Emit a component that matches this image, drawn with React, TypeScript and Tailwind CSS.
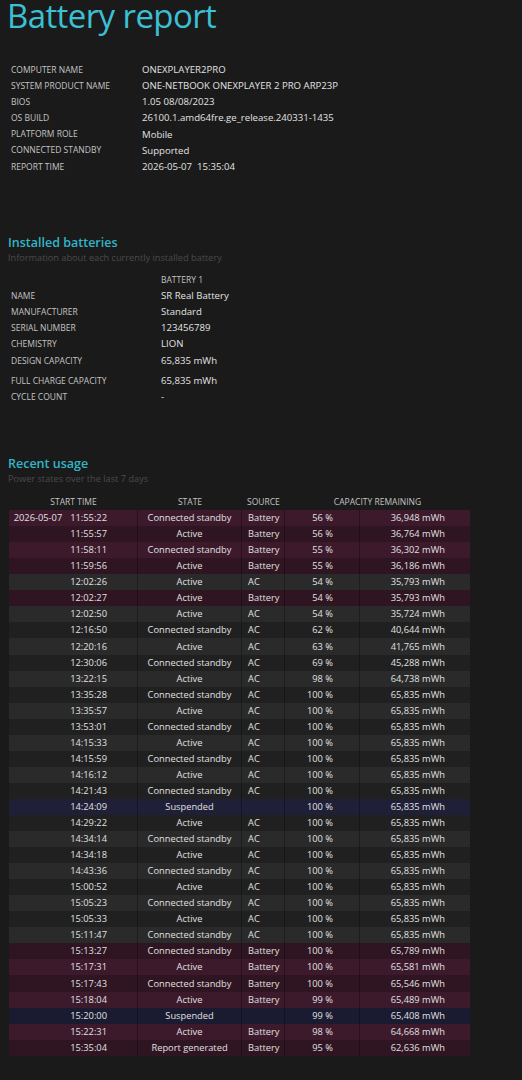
import React from "react";

type Row = [string, string, string, string, string, string];

const rows: Row[] = [
  ["2026-05-07", "11:55:22", "Connected standby", "Battery", "56 %", "36,948 mWh"],
  ["", "11:55:57", "Active", "Battery", "56 %", "36,764 mWh"],
  ["", "11:58:11", "Connected standby", "Battery", "55 %", "36,302 mWh"],
  ["", "11:59:56", "Active", "Battery", "55 %", "36,186 mWh"],
  ["", "12:02:26", "Active", "AC", "54 %", "35,793 mWh"],
  ["", "12:02:27", "Active", "Battery", "54 %", "35,793 mWh"],
  ["", "12:02:50", "Active", "AC", "54 %", "35,724 mWh"],
  ["", "12:16:50", "Connected standby", "AC", "62 %", "40,644 mWh"],
  ["", "12:20:16", "Active", "AC", "63 %", "41,765 mWh"],
  ["", "12:30:06", "Connected standby", "AC", "69 %", "45,288 mWh"],
  ["", "13:22:15", "Active", "AC", "98 %", "64,738 mWh"],
  ["", "13:35:28", "Connected standby", "AC", "100 %", "65,835 mWh"],
  ["", "13:35:57", "Active", "AC", "100 %", "65,835 mWh"],
  ["", "13:53:01", "Connected standby", "AC", "100 %", "65,835 mWh"],
  ["", "14:15:33", "Active", "AC", "100 %", "65,835 mWh"],
  ["", "14:15:59", "Connected standby", "AC", "100 %", "65,835 mWh"],
  ["", "14:16:12", "Active", "AC", "100 %", "65,835 mWh"],
  ["", "14:21:43", "Connected standby", "AC", "100 %", "65,835 mWh"],
  ["", "14:24:09", "Suspended", "", "100 %", "65,835 mWh"],
  ["", "14:29:22", "Active", "AC", "100 %", "65,835 mWh"],
  ["", "14:34:14", "Connected standby", "AC", "100 %", "65,835 mWh"],
  ["", "14:34:18", "Active", "AC", "100 %", "65,835 mWh"],
  ["", "14:43:36", "Connected standby", "AC", "100 %", "65,835 mWh"],
  ["", "15:00:52", "Active", "AC", "100 %", "65,835 mWh"],
  ["", "15:05:23", "Connected standby", "AC", "100 %", "65,835 mWh"],
  ["", "15:05:33", "Active", "AC", "100 %", "65,835 mWh"],
  ["", "15:11:47", "Connected standby", "AC", "100 %", "65,835 mWh"],
  ["", "15:13:27", "Connected standby", "Battery", "100 %", "65,789 mWh"],
  ["", "15:17:31", "Active", "Battery", "100 %", "65,581 mWh"],
  ["", "15:17:43", "Connected standby", "Battery", "100 %", "65,546 mWh"],
  ["", "15:18:04", "Active", "Battery", "99 %", "65,489 mWh"],
  ["", "15:20:00", "Suspended", "", "99 %", "65,408 mWh"],
  ["", "15:22:31", "Active", "Battery", "98 %", "64,668 mWh"],
  ["", "15:35:04", "Report generated", "Battery", "95 %", "62,636 mWh"],
];

function rowBg(source: string, state: string, i: number) {
  const even = i % 2 === 0;
  if (state === "Suspended") return even ? "bg-[#1f1f38]" : "bg-[#1a1a30]";
  if (source === "Battery") return even ? "bg-[#3c1a2c]" : "bg-[#2f1421]";
  return even ? "bg-[#2a2a2a]" : "bg-[#202020]";
}

const info: [string, string][] = [
  ["COMPUTER NAME", "ONEXPLAYER2PRO"],
  ["SYSTEM PRODUCT NAME", "ONE-NETBOOK ONEXPLAYER 2 PRO ARP23P"],
  ["BIOS", "1.05 08/08/2023"],
  ["OS BUILD", "26100.1.amd64fre.ge_release.240331-1435"],
  ["PLATFORM ROLE", "Mobile"],
  ["CONNECTED STANDBY", "Supported"],
  ["REPORT TIME", "2026-05-07\u00a0\u00a015:35:04"],
];

const battery: [string, string, string][] = [
  ["NAME", "SR Real Battery", ""],
  ["MANUFACTURER", "Standard", ""],
  ["SERIAL NUMBER", "123456789", ""],
  ["CHEMISTRY", "LION", ""],
  ["DESIGN CAPACITY", "65,835 mWh", "mt-[1px]"],
  ["FULL CHARGE CAPACITY", "65,835 mWh", "mt-[4px]"],
  ["CYCLE COUNT", "-", ""],
];

export default function App() {
  return (
    <div className="w-[522px] min-h-[1080px] bg-[#1a1a1a] font-['Open_Sans',sans-serif] text-[#d8d8d8]">
      <h1 className="pl-[7px] text-[33px] leading-[31px] font-normal text-[#3cc0d4] tracking-[-0.6px]">
        Battery report
      </h1>

      <div className="mt-[31px] pl-[11px] flex flex-col">
        {info.map(([k, v]) => (
          <div key={k} className="flex h-[16.17px] items-center">
            <div className="w-[131px] text-[8.5px] text-[#c4c4c4]">{k}</div>
            <div className="text-[9.6px] text-[#e2e2e2]">{v}</div>
          </div>
        ))}
      </div>

      <div className="mt-[60px] pl-[8px]">
        <div className="text-[12.5px] leading-[16px] font-semibold text-[#33b5c6]">Installed batteries</div>
        <div className="text-[9.2px] leading-[14px] text-[#4a4a4a]">Information about each currently installed battery</div>
      </div>

      <div className="mt-[7px] pl-[11px] flex flex-col">
        <div className="flex h-[16px] items-center">
          <div className="w-[150px]" />
          <div className="text-[8.5px] text-[#c4c4c4]">BATTERY 1</div>
        </div>
        {battery.map(([k, v, m]) => (
          <div key={k} className={`flex h-[16px] items-center ${m}`}>
            <div className="w-[150px] text-[8.5px] text-[#c4c4c4]">{k}</div>
            <div className="text-[9.6px] text-[#e2e2e2]">{v}</div>
          </div>
        ))}
      </div>

      <div className="mt-[51px] pl-[8px]">
        <div className="text-[12.5px] leading-[16px] font-semibold text-[#33b5c6]">Recent usage</div>
        <div className="text-[9.2px] leading-[14px] text-[#4a4a4a]">Power states over the last 7 days</div>
      </div>

      <div className="mt-[8px] ml-[9px] w-[461px] text-[9.3px]">
        <div className="flex h-[16px] items-center text-[8.5px] text-[#c4c4c4]">
          <div className="w-[129px] text-center">START TIME</div>
          <div className="w-[104px] text-center">STATE</div>
          <div className="w-[43px] pl-[5px]">SOURCE</div>
          <div className="flex-1 text-center">CAPACITY REMAINING</div>
        </div>
        {rows.map((r, i) => (
          <div key={i} className={`flex h-[16.05px] items-center ${rowBg(r[3], r[2], i)} text-[#e0e0e0]`}>
            <div className="w-[129px] h-full flex items-center justify-end pr-[30px] border-r border-black/30">
              {r[0] && <span className="mr-[8px]">{r[0]}</span>}
              <span>{r[1]}</span>
            </div>
            <div className="w-[104px] h-full flex items-center justify-center border-r border-black/30">{r[2]}</div>
            <div className="w-[43px] h-full flex items-center pl-[6px] border-r border-black/30">{r[3]}</div>
            <div className="w-[75px] h-full flex items-center justify-end pr-[26px] border-r border-black/30">{r[4]}</div>
            <div className="flex-1 h-full flex items-center justify-end pr-[25px]">{r[5]}</div>
          </div>
        ))}
      </div>
    </div>
  );
}
